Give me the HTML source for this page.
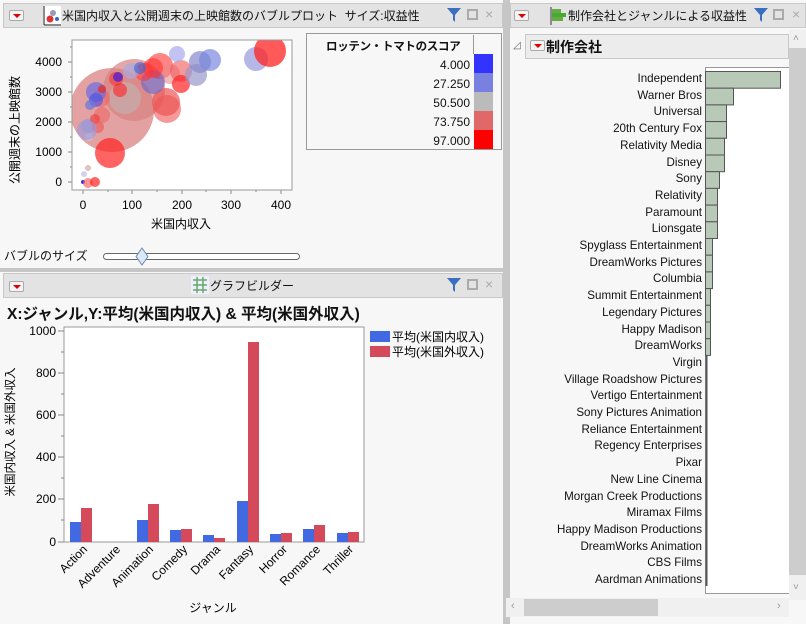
<!DOCTYPE html>
<html><head><meta charset="utf-8"><style>
*{box-sizing:border-box;margin:0;padding:0}
body{width:806px;height:624px;background:#f7f7f7;font-family:"Liberation Sans","Noto Sans CJK JP",sans-serif;font-size:12px;color:#111;position:relative;overflow:hidden}
.abs{position:absolute}
.tb{position:absolute;background:#e3e3e3;border:1px solid #c8c8c8;height:25px}
.dd{position:absolute;width:15px;height:11px;border:1px solid #aaa;border-radius:2px;background:#f4f4f4}
.dd:after{content:"";position:absolute;left:3px;top:3px;border-left:4px solid transparent;border-right:4px solid transparent;border-top:4px solid #d00}
.ttl{position:absolute;top:5px;font-size:12px;white-space:nowrap}
.sq{position:absolute;width:11px;height:11px;border:2px solid #aaa}
.x{position:absolute;color:#aaa;font-size:14px}
</style></head><body>
<div class="abs" style="left:503px;top:0;width:7px;height:624px;background:#c6c6c6"></div>
<div class="abs" style="left:0;top:268px;width:503px;height:4px;background:#c6c6c6"></div>

<div class="tb" style="left:3px;top:3px;width:500px"></div>
<div class="dd" style="left:9px;top:10px"></div>
<svg class="abs" style="left:43px;top:6px" width="18" height="20"><line x1="1" y1="0" x2="1" y2="19" stroke="#333"/><line x1="1" y1="19" x2="18" y2="19" stroke="#333"/><rect x="2" y="0" width="16" height="18" fill="#fff"/><circle cx="7" cy="13" r="3.5" fill="#d33"/><circle cx="10" cy="7" r="3" fill="#99b"/><circle cx="14" cy="13" r="2" fill="#36c"/></svg>
<div class="ttl" style="left:62px;top:7px">米国内収入と公開週末の上映館数のバブルプロット&nbsp; サイズ:収益性</div>
<svg class="abs" style="left:447px;top:8px" width="14" height="14"><path d="M0 0H14L8 7V14L6 12V7Z" fill="#3a6fc0"/></svg>
<div class="sq" style="left:467px;top:9px"></div>
<div class="x" style="left:485px;top:6px">×</div>

<svg class="abs" style="left:0;top:30px" width="300" height="210">
<text x="19" y="100" font-size="12" transform="rotate(-90 19 100)" text-anchor="middle">公開週末の上映館数</text>
<g font-size="12" text-anchor="end"><text x="62" y="36">4000</text><text x="62" y="66">3000</text><text x="62" y="96">2000</text><text x="62" y="126">1000</text><text x="62" y="156">0</text></g>
<g stroke="#888"><line x1="68" y1="32" x2="72" y2="32"/><line x1="68" y1="62" x2="72" y2="62"/><line x1="68" y1="92" x2="72" y2="92"/><line x1="68" y1="122" x2="72" y2="122"/><line x1="68" y1="152" x2="72" y2="152"/>
<line x1="70" y1="17" x2="72" y2="17"/><line x1="70" y1="47" x2="72" y2="47"/><line x1="70" y1="77" x2="72" y2="77"/><line x1="70" y1="107" x2="72" y2="107"/><line x1="70" y1="137" x2="72" y2="137"/>
<line x1="83" y1="160" x2="83" y2="164"/><line x1="132" y1="160" x2="132" y2="164"/><line x1="182" y1="160" x2="182" y2="164"/><line x1="231" y1="160" x2="231" y2="164"/><line x1="281" y1="160" x2="281" y2="164"/>
<line x1="108" y1="160" x2="108" y2="162"/><line x1="157" y1="160" x2="157" y2="162"/><line x1="206" y1="160" x2="206" y2="162"/><line x1="256" y1="160" x2="256" y2="162"/></g>
<g font-size="12" text-anchor="middle"><text x="83" y="179">0</text><text x="132" y="179">100</text><text x="182" y="179">200</text><text x="231" y="179">300</text><text x="281" y="179">400</text></g>
<text x="181" y="198" font-size="12" text-anchor="middle">米国内収入</text>
<defs><clipPath id="c"><rect x="72" y="10" width="220" height="150"/></clipPath></defs>
<rect x="72" y="10" width="220" height="150" fill="#fff"/>
<g clip-path="url(#c)">
<circle cx="112" cy="80" r="42" fill="#d98282" opacity="0.75"/>
<circle cx="134" cy="60" r="31" fill="#d98282" opacity="0.7"/>
<circle cx="125" cy="68" r="16" fill="#bbb" opacity="0.5"/>
<circle cx="166" cy="72" r="14" fill="#e55" opacity="0.7"/>
<circle cx="167" cy="79" r="14" fill="#e55" opacity="0.6"/>
<circle cx="160" cy="36" r="13" fill="#f33" opacity="0.6"/>
<circle cx="170" cy="44" r="10" fill="#e88" opacity="0.6"/>
<circle cx="181" cy="41" r="11" fill="#e55" opacity="0.6"/>
<circle cx="181" cy="54" r="9" fill="#f22" opacity="0.7"/>
<circle cx="153" cy="52" r="12" fill="#66c" opacity="0.6"/>
<circle cx="153" cy="38" r="10" fill="#f33" opacity="0.6"/>
<circle cx="144" cy="42" r="9" fill="#f33" opacity="0.6"/>
<circle cx="196" cy="45" r="11" fill="#99c" opacity="0.7"/>
<circle cx="200" cy="32" r="11" fill="#88c" opacity="0.7"/>
<circle cx="210" cy="30" r="11" fill="#78d" opacity="0.7"/>
<circle cx="256" cy="29" r="12" fill="#99d" opacity="0.7"/>
<circle cx="270" cy="21" r="16" fill="#f22" opacity="0.75"/>
<circle cx="177" cy="24" r="8" fill="#aae" opacity="0.7"/>
<circle cx="110" cy="123" r="15" fill="#f22" opacity="0.7"/>
<circle cx="131" cy="41" r="8" fill="#aad" opacity="0.7"/>
<circle cx="140" cy="38" r="6" fill="#36d" opacity="0.6"/>
<circle cx="116" cy="49" r="7" fill="#e44" opacity="0.7"/>
<circle cx="118" cy="47" r="5" fill="#52c" opacity="0.8"/>
<circle cx="120" cy="60" r="7" fill="#f22" opacity="0.6"/>
<circle cx="101" cy="68" r="9" fill="#e66" opacity="0.6"/>
<circle cx="102" cy="85" r="8" fill="#e66" opacity="0.6"/>
<circle cx="96" cy="62" r="10" fill="#56e" opacity="0.6"/>
<circle cx="96" cy="70" r="7" fill="#45e" opacity="0.6"/>
<circle cx="90" cy="75" r="5" fill="#67d" opacity="0.7"/>
<circle cx="88" cy="96" r="7" fill="#99c" opacity="0.7"/>
<circle cx="89" cy="107" r="4" fill="#ccd" opacity="0.8"/>
<circle cx="95" cy="89" r="5" fill="#e44" opacity="0.7"/>
<circle cx="98" cy="97" r="6" fill="#e55" opacity="0.6"/>
<circle cx="87" cy="100" r="10" fill="#99d" opacity="0.6"/>
<circle cx="102" cy="59" r="4" fill="#d33" opacity="0.8"/>
<circle cx="88" cy="138" r="3" fill="#dbb" opacity="0.9"/>
<circle cx="84" cy="144" r="3" fill="#cce" opacity="0.9"/>
<circle cx="83" cy="152" r="2" fill="#33e"/>
<circle cx="88" cy="153" r="5" fill="#f66" opacity="0.7"/>
<circle cx="95" cy="152" r="5" fill="#f22" opacity="0.7"/>
</g>
<rect x="72" y="10" width="220" height="150" fill="none" stroke="#999"/>
</svg>
<div class="abs" style="left:306px;top:33px;width:196px;height:117px;border:1px solid #999;background:#f7f7f7"></div>
<div class="abs" style="left:326px;top:38px;font-weight:bold;font-size:11.5px;letter-spacing:-0.3px;white-space:nowrap">ロッテン・トマトのスコア</div>
<div class="abs" style="left:473px;top:35px;width:1px;height:19px;background:#999"></div>
<div class="abs" style="left:474px;top:54px;width:19px;height:19px;background:#33f"></div>
<div class="abs" style="left:474px;top:73px;width:19px;height:19px;background:#7a80e0"></div>
<div class="abs" style="left:474px;top:92px;width:19px;height:19px;background:#bbb"></div>
<div class="abs" style="left:474px;top:111px;width:19px;height:19px;background:#e06868"></div>
<div class="abs" style="left:474px;top:130px;width:19px;height:19px;background:#f00"></div>
<div class="abs" style="left:400px;top:56px;width:70px;text-align:right;line-height:19px;font-size:12px">4.000<br>27.250<br>50.500<br>73.750<br>97.000</div>
<div class="abs" style="left:4px;top:247px;font-size:12px">バブルのサイズ</div>
<div class="abs" style="left:103px;top:253px;width:197px;height:7px;border:1px solid #666;border-radius:4px;background:#fff"></div>
<svg class="abs" style="left:135px;top:247px" width="14" height="19"><path d="M7 1L13 9.5L7 18L1 9.5Z" fill="#dde8f6" stroke="#6a8ab0"/></svg>

<div class="tb" style="left:3px;top:273px;width:500px"></div>
<div class="dd" style="left:9px;top:281px"></div>
<svg class="abs" style="left:191px;top:276px" width="18" height="18"><rect x="0" y="0" width="18" height="18" fill="#eef"/><g stroke="#6a6" stroke-width="1.5"><line x1="2" y1="4" x2="16" y2="4"/><line x1="2" y1="9" x2="16" y2="9"/><line x1="2" y1="14" x2="16" y2="14"/><line x1="6" y1="1" x2="6" y2="17"/><line x1="12" y1="1" x2="12" y2="17"/></g></svg>
<div class="ttl" style="left:210px;top:277px">グラフビルダー</div>
<svg class="abs" style="left:447px;top:278px" width="14" height="14"><path d="M0 0H14L8 7V14L6 12V7Z" fill="#3a6fc0"/></svg>
<div class="sq" style="left:467px;top:279px"></div>
<div class="x" style="left:485px;top:276px">×</div>
<div class="abs" style="left:7px;top:302px;font-weight:bold;font-size:15.5px;white-space:nowrap">X:ジャンル,Y:平均(米国内収入) &amp; 平均(米国外収入)</div>

<svg class="abs" style="left:0;top:320px" width="503" height="300">
<rect x="64" y="7" width="300" height="215" fill="#fff" stroke="#999"/>
<g font-size="12" text-anchor="end"><text x="56" y="15">1000</text><text x="56" y="57">800</text><text x="56" y="99">600</text><text x="56" y="141">400</text><text x="56" y="183">200</text><text x="56" y="226">0</text></g>
<g stroke="#888"><line x1="58" y1="11" x2="64" y2="11"/><line x1="58" y1="53" x2="64" y2="53"/><line x1="58" y1="95" x2="64" y2="95"/><line x1="58" y1="137" x2="64" y2="137"/><line x1="58" y1="179" x2="64" y2="179"/><line x1="58" y1="222" x2="64" y2="222"/>
<line x1="61" y1="32" x2="64" y2="32"/><line x1="61" y1="74" x2="64" y2="74"/><line x1="61" y1="116" x2="64" y2="116"/><line x1="61" y1="158" x2="64" y2="158"/><line x1="61" y1="200" x2="64" y2="200"/></g>
<text x="14" y="112" font-size="11.5" transform="rotate(-90 14 112)" text-anchor="middle">米国内収入 &amp; 米国外収入</text>
<g fill="#4169e1">
<rect x="70" y="202" width="11" height="20"/><rect x="137" y="200" width="11" height="22"/><rect x="170" y="210" width="11" height="12"/><rect x="203" y="215" width="11" height="7"/><rect x="237" y="181" width="11" height="41"/><rect x="270" y="214" width="11" height="8"/><rect x="303" y="209" width="11" height="13"/><rect x="337" y="213" width="11" height="9"/></g>
<g fill="#d44a5a">
<rect x="81" y="188" width="11" height="34"/><rect x="148" y="184" width="11" height="38"/><rect x="181" y="209" width="11" height="13"/><rect x="214" y="218" width="11" height="4"/><rect x="248" y="22" width="11" height="200"/><rect x="281" y="213" width="11" height="9"/><rect x="314" y="205" width="11" height="17"/><rect x="348" y="212" width="11" height="10"/></g>
<g font-size="12" text-anchor="end">
<text transform="translate(88 230) rotate(-45)">Action</text>
<text transform="translate(121 230) rotate(-45)">Adventure</text>
<text transform="translate(154 230) rotate(-45)">Animation</text>
<text transform="translate(188 230) rotate(-45)">Comedy</text>
<text transform="translate(221 230) rotate(-45)">Drama</text>
<text transform="translate(254 230) rotate(-45)">Fantasy</text>
<text transform="translate(288 230) rotate(-45)">Horror</text>
<text transform="translate(321 230) rotate(-45)">Romance</text>
<text transform="translate(354 230) rotate(-45)">Thriller</text></g>
<text x="213" y="292" font-size="12" text-anchor="middle">ジャンル</text>
<rect x="370" y="11" width="20" height="11" fill="#4169e1"/><rect x="370" y="26" width="20" height="11" fill="#d44a5a"/>
<text x="392" y="21" font-size="12">平均(米国内収入)</text><text x="392" y="36" font-size="12">平均(米国外収入)</text>
</svg>

<div class="tb" style="left:510px;top:3px;width:296px"></div>
<div class="dd" style="left:514px;top:10px"></div>
<svg class="abs" style="left:550px;top:7px" width="16" height="18"><line x1="1" y1="0" x2="1" y2="18" stroke="#333"/><rect x="2" y="2" width="9" height="4" fill="#6a4"/><rect x="2" y="6" width="14" height="4" fill="#4a3"/><rect x="2" y="10" width="11" height="4" fill="#6a4"/></svg>
<div class="ttl" style="left:568px;top:7px">制作会社とジャンルによる収益性</div>
<svg class="abs" style="left:754px;top:8px" width="14" height="14"><path d="M0 0H14L8 7V14L6 12V7Z" fill="#3a6fc0"/></svg>
<div class="sq" style="left:773px;top:9px"></div>
<div class="x" style="left:792px;top:6px">×</div>

<div class="abs" style="left:513px;top:40px;color:#666;font-size:10px">◿</div>
<div class="abs" style="left:525px;top:34px;width:264px;height:25px;border:1px solid #c8c8c8;background:#ececec"></div>
<div class="dd" style="left:530px;top:40px"></div>
<div class="abs" style="left:546px;top:37px;font-weight:bold;font-size:14px">制作会社</div>
<div class="abs" style="left:789px;top:30px;width:17px;height:570px;background:#f0f0f0"></div>
<div class="abs" style="left:789px;top:48px;width:17px;height:527px;background:#cdcdcd"></div>
<div class="abs" style="left:793px;top:33px;color:#999;font-size:10px">˄</div>
<div class="abs" style="left:793px;top:582px;color:#999;font-size:10px">˅</div>
<div class="abs" style="left:506px;top:598px;width:283px;height:19px;background:#f0f0f0"></div>
<div class="abs" style="left:524px;top:599px;width:134px;height:17px;background:#cdcdcd"></div>
<div class="abs" style="left:511px;top:600px;color:#999;font-size:11px">‹</div>
<div class="abs" style="left:777px;top:600px;color:#999;font-size:11px">›</div>

<div class="abs" style="left:705px;top:67px;width:84px;height:527px;background:#fff;border:1px solid #999;border-right:none"></div>
<div class="abs" style="left:520px;top:71px;width:182px;font-size:11.6px;line-height:16.7px;text-align:right;white-space:nowrap">Independent<br>Warner Bros<br>Universal<br>20th Century Fox<br>Relativity Media<br>Disney<br>Sony<br>Relativity<br>Paramount<br>Lionsgate<br>Spyglass Entertainment<br>DreamWorks Pictures<br>Columbia<br>Summit Entertainment<br>Legendary Pictures<br>Happy Madison<br>DreamWorks<br>Virgin<br>Village Roadshow Pictures<br>Vertigo Entertainment<br>Sony Pictures Animation<br>Reliance Entertainment<br>Regency Enterprises<br>Pixar<br>New Line Cinema<br>Morgan Creek Productions<br>Miramax Films<br>Happy Madison Productions<br>DreamWorks Animation<br>CBS Films<br>Aardman Animations</div>
<svg class="abs" style="left:705px;top:70px" width="84" height="520">
<g fill="#b9c9b8" stroke="#555">
<rect x="0.5" y="1.5" width="75" height="16.7"/>
<rect x="0.5" y="18.2" width="28" height="16.7"/>
<rect x="0.5" y="34.9" width="21" height="16.7"/>
<rect x="0.5" y="51.6" width="21" height="16.7"/>
<rect x="0.5" y="68.3" width="19" height="16.7"/>
<rect x="0.5" y="85" width="19" height="16.7"/>
<rect x="0.5" y="101.7" width="14" height="16.7"/>
<rect x="0.5" y="118.4" width="12" height="16.7"/>
<rect x="0.5" y="135.1" width="12" height="16.7"/>
<rect x="0.5" y="151.8" width="12" height="16.7"/>
<rect x="0.5" y="168.5" width="7" height="16.7"/>
<rect x="0.5" y="185.2" width="7" height="16.7"/>
<rect x="0.5" y="201.9" width="7" height="16.7"/>
<rect x="0.5" y="218.6" width="5" height="16.7"/>
<rect x="0.5" y="235.3" width="5" height="16.7"/>
<rect x="0.5" y="252" width="5" height="16.7"/>
<rect x="0.5" y="268.7" width="5" height="16.7"/>
</g>
<line x1="1.5" y1="285" x2="1.5" y2="516" stroke="#555" stroke-width="2"/>
</svg>
</body></html>
